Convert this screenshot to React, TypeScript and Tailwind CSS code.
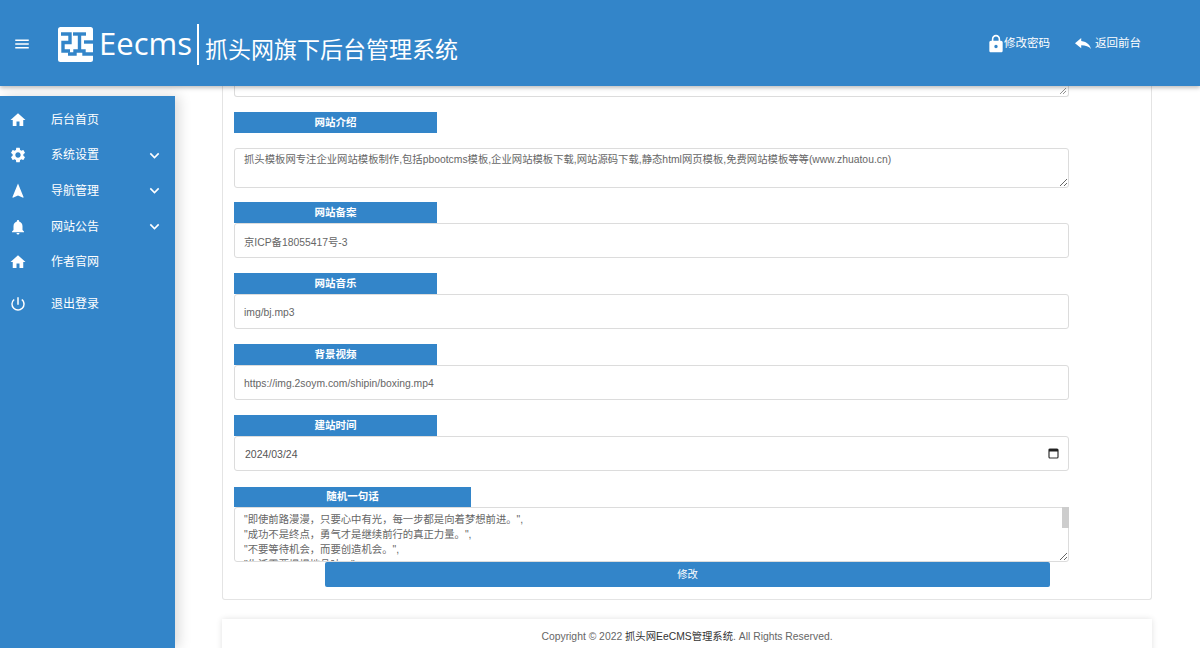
import { MdHome, MdSettings, MdNavigation, MdNotifications, MdPowerSettingsNew, MdKeyboardArrowDown, MdLock, MdMenu } from 'react-icons/md'

const font = "[font-family:'Liberation_Sans','Noto_Sans_CJK_SC',sans-serif]"

const navItems = [
  { icon: MdHome, label: '后台首页', y: 'h-[35.5px]' },
  { icon: MdSettings, label: '系统设置', arrow: true, y: 'h-[35.5px]' },
  { icon: MdNavigation, label: '导航管理', arrow: true, y: 'h-[35.5px]' },
  { icon: MdNotifications, label: '网站公告', arrow: true, y: 'h-[35.5px] pt-[1px]' },
  { icon: MdHome, label: '作者官网', y: 'h-[35.5px]' },
  { icon: MdPowerSettingsNew, label: '退出登录', y: 'h-[35.5px] mt-[7px]' },
]

function Logo() {
  return (
    <svg width="35" height="35" viewBox="0 0 35 35" className="shrink-0">
      <rect width="35" height="35" rx="2.5" fill="#fff" />
      <g fill="none" stroke="#3385c9" strokeWidth="3.4">
        <path d="M3 7H12V15.5H5V24H12" />
        <path d="M15 7H28" />
        <path d="M21.5 7V24" />
        <path d="M10 27H17V24H26V27H35" />
        <path d="M26 15H35" />
      </g>
    </svg>
  )
}

function FieldLabel({ text, wide }: { text: string; wide?: boolean }) {
  return (
    <div className={`${wide ? 'w-[237px] h-[20px]' : 'w-[203px] h-[21px]'} bg-[#3385c9] text-white text-[10.5px] font-bold flex items-center justify-center`}>
      {text}
    </div>
  )
}

function Field({ label, value }: { label: string; value: string }) {
  return (
    <div className="mt-[15px]">
      <FieldLabel text={label} />
      <input
        readOnly
        value={value}
        className="block w-[835px] h-[35px] border border-[#dcdcdc] rounded-[3px] px-[9px] pt-[1px] text-[10.35px] text-[#666] bg-white outline-none"
      />
    </div>
  )
}

export default function App() {
  return (
    <div className={`w-[1200px] h-[648px] overflow-hidden bg-white flex flex-col ${font}`}>
      <header className="relative z-20 h-[86px] shrink-0 bg-[#3385c9] shadow-[0_2px_4px_rgba(0,0,0,0.25)] flex items-center text-white">
        <MdMenu className="ml-[13px] text-[18px] mt-[1px]" />
        <div className="ml-[27px] self-start flex items-start">
          <div className="mt-[27px]">
            <Logo />
          </div>
          <span className="ml-[6px] mt-[28px] text-[31px] font-['Open_Sans'] leading-none">Eecms</span>
          <div className="ml-[5px] mt-[24px] w-[2px] h-[41px] bg-white" />
          <span className="ml-[6px] mt-[39px] text-[23px] leading-none">抓头网旗下后台管理系统</span>
        </div>
        <div className="ml-auto mr-[59px] flex items-center text-[11.5px] mt-[1px]">
          <MdLock className="text-[20px]" />
          <span className="ml-[-2px]">修改密码</span>
          <svg width="16" height="11" viewBox="3 5 18 15" preserveAspectRatio="none" fill="currentColor" className="ml-[25px]">
            <path d="M10 9V5l-7 7 7 7v-4.1c5 0 8.5 1.6 11 5.1-1-5-4-10-11-11z" />
          </svg>
          <span className="ml-[4px]">返回前台</span>
        </div>
      </header>

      <div className="flex-1 flex min-h-0">
        <aside className="relative z-10 w-[175px] shrink-0 mt-[10px] bg-[#3385c9] shadow-[4px_0_12px_rgba(0,0,0,0.15)] pt-[6px] text-white">
          {navItems.map((item) => (
            <div key={item.label} className={`flex items-center text-[12px] ${item.y}`}>
              <item.icon className="ml-[9px] text-[18px] shrink-0" />
              <span className="ml-[24px]">{item.label}</span>
              {item.arrow && <MdKeyboardArrowDown className="ml-auto mr-[11px] text-[19px]" />}
            </div>
          ))}
        </aside>

        <main className="flex-1 min-w-0 pl-[47px] pr-[48px]">
          <section className="h-[514px] border border-t-0 border-[#e4e4e4] rounded-b-[3px] px-[11px]">
            <div className="h-[11px] w-[835px] border border-t-0 border-[#dcdcdc] rounded-b-[3px] flex justify-end items-end">
              <svg width="8" height="8" viewBox="0 0 8 8" className="mb-[1px] mr-[1px]">
                <path d="M1 7L7 1M4 7L7 4" stroke="#777" strokeWidth="0.8" />
              </svg>
            </div>
            <div className="mt-[15px]">
              <FieldLabel text="网站介绍" />
              <textarea
                readOnly
                defaultValue="抓头模板网专注企业网站模板制作,包括pbootcms模板,企业网站模板下载,网站源码下载,静态html网页模板,免费网站模板等等(www.zhuatou.cn)"
                className="block mt-[15px] w-[835px] h-[40px] border border-[#dcdcdc] rounded-[3px] px-[9px] py-[4px] text-[10.35px] leading-[14px] text-[#666] outline-none"
              />
            </div>
            <div className="mt-[-1px]">
              <Field label="网站备案" value="京ICP备18055417号-3" />
            </div>
            <Field label="网站音乐" value="img/bj.mp3" />
            <Field label="背景视频" value="https://img.2soym.com/shipin/boxing.mp4" />
            <div className="mt-[15px]">
              <FieldLabel text="建站时间" />
              <div className="relative w-[835px]">
                <input
                  readOnly
                  value="2024/03/24"
                  className="block w-full h-[35px] border border-[#dcdcdc] rounded-[3px] px-[10px] text-[10.5px] text-[#555] outline-none"
                />
                <svg width="11" height="11" viewBox="0 0 11 11" className="absolute right-[10px] top-[12px]">
                  <rect x="1" y="1" width="9" height="9" rx="1" fill="none" stroke="#333" strokeWidth="1.2" />
                  <rect x="1" y="1" width="9" height="2.5" fill="#222" />
                </svg>
              </div>
            </div>
            <div className="mt-[16px]">
              <FieldLabel text="随机一句话" wide />
              <div className="relative w-[835px]">
                <textarea
                  readOnly
                  defaultValue={'"即使前路漫漫，只要心中有光，每一步都是向着梦想前进。",\n"成功不是终点，勇气才是继续前行的真正力量。",\n"不要等待机会，而要创造机会。",\n"生活需要慢慢地品味。",\n"每一天都是新的开始。",\n"坚持就是胜利。",\n"相信自己，你可以的。",\n"心中有梦，脚下有路。",\n"保持热爱，奔赴山海。"'}
                  className="block w-full h-[55px] border border-[#dcdcdc] rounded-[3px] px-[9px] py-[4px] text-[10.35px] leading-[15px] text-[#666] outline-none"
                />
                <div className="absolute right-0 top-0 w-[7px] h-[21px] bg-[#cdcdcd]" />
              </div>
            </div>
            <button className="block ml-[91px] w-[725px] h-[25px] bg-[#3385c9] text-white text-[10.35px] rounded-[2px]">修改</button>
          </section>
          <footer className="mt-[19px] h-[60px] shadow-[0_0_6px_rgba(0,0,0,0.12)] pt-[10px] text-center text-[10.35px] text-[#666]">
            Copyright © 2022 <span className="text-[#333]">抓头网EeCMS管理系统</span>. All Rights Reserved.
          </footer>
        </main>
      </div>
    </div>
  )
}
